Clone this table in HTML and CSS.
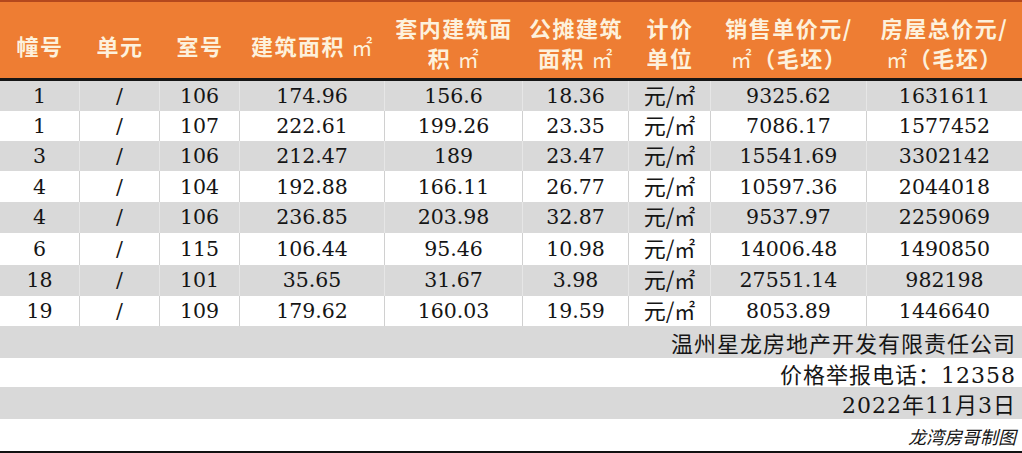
FILE: index.html
```html
<!DOCTYPE html>
<html lang="zh-CN">
<head>
<meta charset="utf-8">
<title>价格表</title>
<link rel="stylesheet" href="styles.css">
</head>
<body>
<div class="sheet">
  <div class="head">
    <div class="hc single"><span class="ht">幢号</span></div>
    <div class="hc single"><span class="ht">单元</span></div>
    <div class="hc single"><span class="ht">室号</span></div>
    <div class="hc single"><span class="ht">建筑面积 <span class="hsq">㎡</span></span></div>
    <div class="hc"><span class="ht">套内建筑面<br>积 <span class="hsq">㎡</span></span></div>
    <div class="hc"><span class="ht">公摊建筑<br>面积 <span class="hsq">㎡</span></span></div>
    <div class="hc"><span class="ht">计价<br>单位</span></div>
    <div class="hc"><span class="ht">销售单价元/<br><span class="hsq">㎡</span>（毛坯）</span></div>
    <div class="hc"><span class="ht">房屋总价元/<br><span class="hsq">㎡</span>（毛坯）</span></div>
  </div>

  <div class="row gray h30"><div class="c">1</div><div class="c">/</div><div class="c">106</div><div class="c">174.96</div><div class="c">156.6</div><div class="c">18.36</div><div class="c unit"><span>元/<span class="sq">㎡</span></span></div><div class="c">9325.62</div><div class="c">1631611</div></div>
  <div class="row white h30"><div class="c">1</div><div class="c">/</div><div class="c">107</div><div class="c">222.61</div><div class="c">199.26</div><div class="c">23.35</div><div class="c unit"><span>元/<span class="sq">㎡</span></span></div><div class="c">7086.17</div><div class="c">1577452</div></div>
  <div class="row gray h30"><div class="c">3</div><div class="c">/</div><div class="c">106</div><div class="c">212.47</div><div class="c">189</div><div class="c">23.47</div><div class="c unit"><span>元/<span class="sq">㎡</span></span></div><div class="c">15541.69</div><div class="c">3302142</div></div>
  <div class="row white h31"><div class="c">4</div><div class="c">/</div><div class="c">104</div><div class="c">192.88</div><div class="c">166.11</div><div class="c">26.77</div><div class="c unit"><span>元/<span class="sq">㎡</span></span></div><div class="c">10597.36</div><div class="c">2044018</div></div>
  <div class="row gray h31"><div class="c">4</div><div class="c">/</div><div class="c">106</div><div class="c">236.85</div><div class="c">203.98</div><div class="c">32.87</div><div class="c unit"><span>元/<span class="sq">㎡</span></span></div><div class="c">9537.97</div><div class="c">2259069</div></div>
  <div class="row white h32"><div class="c">6</div><div class="c">/</div><div class="c">115</div><div class="c">106.44</div><div class="c">95.46</div><div class="c">10.98</div><div class="c unit"><span>元/<span class="sq">㎡</span></span></div><div class="c">14006.48</div><div class="c">1490850</div></div>
  <div class="row gray h32"><div class="c">18</div><div class="c">/</div><div class="c">101</div><div class="c">35.65</div><div class="c">31.67</div><div class="c">3.98</div><div class="c unit"><span>元/<span class="sq">㎡</span></span></div><div class="c">27551.14</div><div class="c">982198</div></div>
  <div class="row white h30"><div class="c">19</div><div class="c">/</div><div class="c">109</div><div class="c">179.62</div><div class="c">160.03</div><div class="c">19.59</div><div class="c unit"><span>元/<span class="sq">㎡</span></span></div><div class="c">8053.89</div><div class="c">1446640</div></div>

  <div class="foot gray h32">温州星龙房地产开发有限责任公司</div>
  <div class="foot white h29">价格举报电话：12358</div>
  <div class="foot gray h32">2022年11月3日</div>
  <div class="foot white h30 sign">龙湾房哥制图</div>
</div>
</body>
</html>
```

FILE: styles.css
```css
html, body {
  margin: 0;
  padding: 0;
  background: #ffffff;
}

.sheet {
  width: 1022px;
  height: 453px;
  overflow: hidden;
  display: flex;
  flex-direction: column;
  font-family: "DejaVu Serif", "Noto Sans CJK SC", serif;
  color: #151515;
  border-bottom: 2px solid #111111;
  box-sizing: border-box;
}

.head,
.row {
  display: grid;
  grid-template-columns: 80px 80px 80px 145px 138px 106px 82px 156px 155px;
}

.head {
  height: 77px;
  background: #ee7d33;
  border-top: 2px solid #b4481d;
  border-bottom: 3px solid #151515;
}

.hc {
  display: flex;
  align-items: center;
  justify-content: center;
  text-align: center;
  font-family: "Noto Sans CJK SC", sans-serif;
  font-weight: 700;
  font-size: 22px;
  line-height: 30px;
  color: #fdf1dc;
  padding-top: 4px;
  box-sizing: border-box;
  white-space: nowrap;
}

.ht {
  display: block;
  letter-spacing: 1.5px;
}

.hc.single {
  padding-top: 10px;
}

.hsq {
  font-size: 21px;
  font-weight: 400;
}

.gray { background: #d9d9d9; }
.white { background: #ffffff; }

.h29 { height: 29px; }
.h30 { height: 30px; }
.h31 { height: 31px; }
.h32 { height: 32px; }

.c {
  display: flex;
  align-items: center;
  justify-content: center;
  font-size: 20.5px;
  border-right: 1px solid #d0d0d0;
  box-sizing: border-box;
}

.gray .c { border-right-color: #e6e6e6; }
.row .c:last-child { border-right: none; }

.unit {
  font-family: "Noto Sans CJK SC", sans-serif;
  font-size: 22px;
  line-height: 26px;
  padding-bottom: 3px;
}

.unit .sq {
  font-size: 21px;
  font-family: "Noto Sans CJK SC", sans-serif;
}

.foot {
  display: flex;
  align-items: center;
  justify-content: flex-end;
  padding-right: 6px;
  font-size: 22px;
  letter-spacing: 1px;
}

.foot.sign {
  font-family: "Noto Sans CJK SC", sans-serif;
  font-size: 18px;
  font-style: italic;
  letter-spacing: 0;
  padding-top: 2px;
}
```
